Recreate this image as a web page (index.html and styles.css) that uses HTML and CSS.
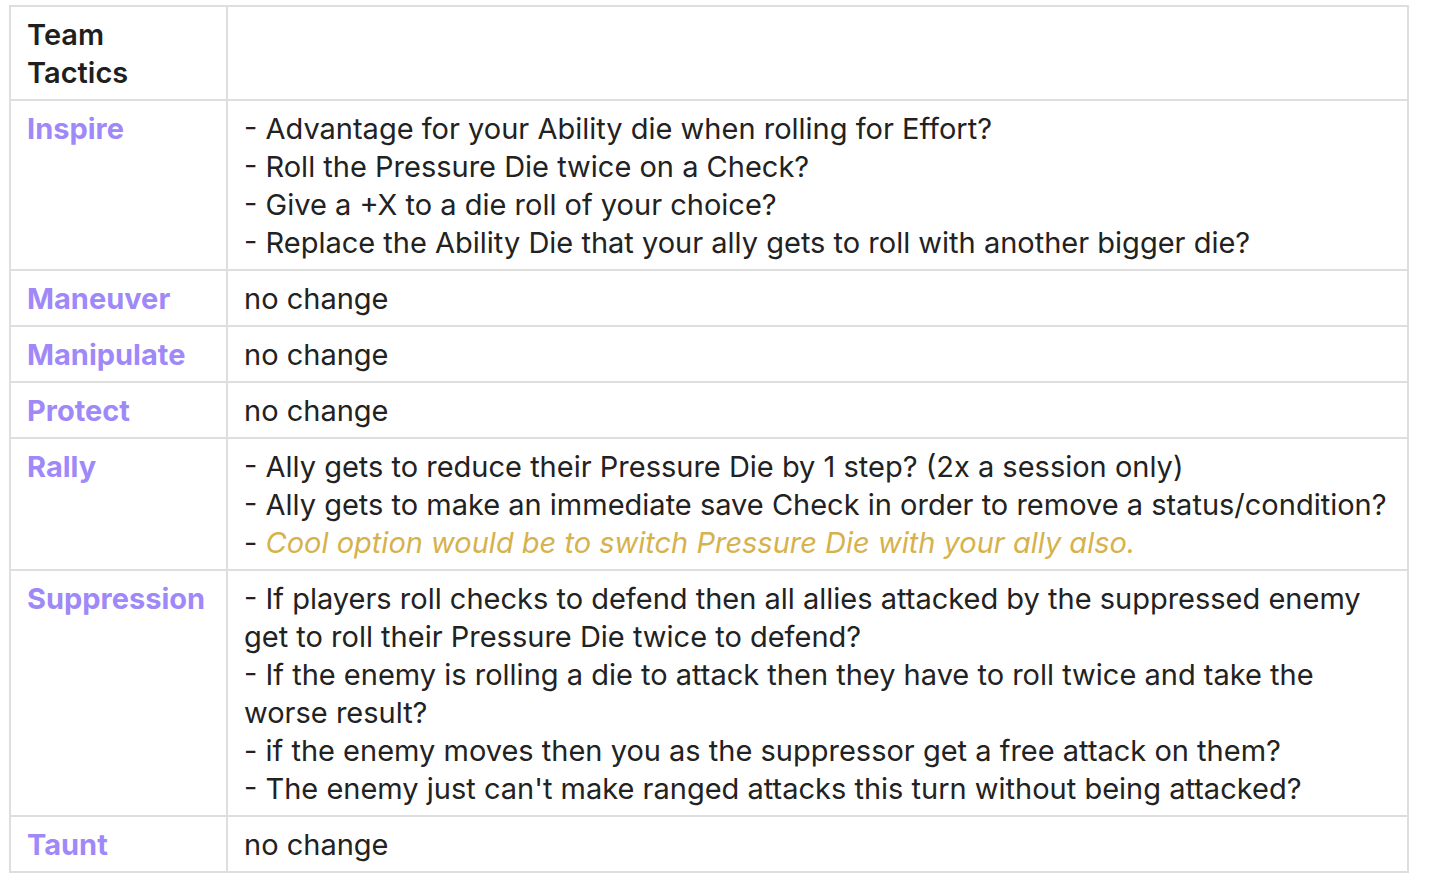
FILE: index.html
```html
<!DOCTYPE html>
<html>
<head>
<meta charset="utf-8">
<link rel="stylesheet" href="styles.css">
</head>
<body>
<table class="tbl">
  <thead>
    <tr><th class="c1">Team<br>Tactics</th><th class="c2"></th></tr>
  </thead>
  <tbody>
    <tr><td class="c1"><span class="tag">Inspire</span></td><td class="c2">- Advantage for your Ability die when rolling for Effort?<br>- Roll the Pressure Die twice on a Check?<br>- Give a +X to a die roll of your choice?<br>- Replace the Ability Die that your ally gets to roll with another bigger die?</td></tr>
    <tr><td class="c1"><span class="tag">Maneuver</span></td><td class="c2">no change</td></tr>
    <tr><td class="c1"><span class="tag">Manipulate</span></td><td class="c2">no change</td></tr>
    <tr><td class="c1"><span class="tag">Protect</span></td><td class="c2">no change</td></tr>
    <tr><td class="c1"><span class="tag">Rally</span></td><td class="c2">- Ally gets to reduce their Pressure Die by 1 step? (2x a session only)<br>- Ally gets to make an immediate save Check in order to remove a status/condition?<br>- <em class="note">Cool option would be to switch Pressure Die with your ally also.</em></td></tr>
    <tr><td class="c1"><span class="tag">Suppression</span></td><td class="c2">- If players roll checks to defend then all allies attacked by the suppressed enemy get to roll their Pressure Die twice to defend?<br>- If the enemy is rolling a die to attack then they have to roll twice and take the worse result?<br>- if the enemy moves then you as the suppressor get a free attack on them?<br>- The enemy just can't make ranged attacks this turn without being attacked?</td></tr>
    <tr><td class="c1"><span class="tag">Taunt</span></td><td class="c2">no change</td></tr>
  </tbody>
</table>
</body>
</html>
```

FILE: styles.css
```css
html, body {
  margin: 0;
  padding: 0;
  background: #ffffff;
}
body {
  padding: 5px 0 0 9px;
  font-family: Inter, "Noto Sans", sans-serif;
  font-size: 29px;
  line-height: 38px;
  color: #222222;
}
.tbl {
  border-collapse: collapse;
  width: 1400px;
}
.tbl th, .tbl td {
  border: 2px solid #dedede;
  padding: 9px 16px 7px 16px;
  text-align: left;
  vertical-align: top;
}
.tbl th {
  font-weight: 600;
  color: #1f1f1f;
}
.c1 {
  width: 183px;
}
.tag {
  color: #9f89f9;
  font-weight: 700;
}
.note {
  color: #d6b24c;
  font-style: italic;
}
```
